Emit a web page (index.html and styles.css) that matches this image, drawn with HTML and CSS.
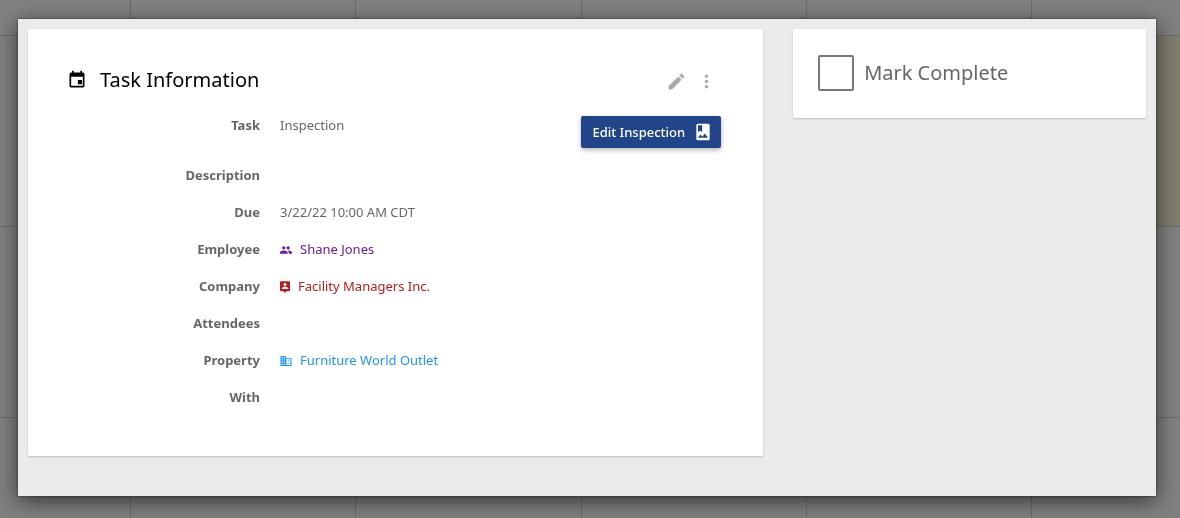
FILE: index.html
```html
<!DOCTYPE html>
<html lang="en">
<head>
  <meta charset="UTF-8">
  <meta name="viewport" content="width=device-width, initial-scale=1.0">
  <title>Task Information</title>
  <link rel="stylesheet" href="styles.css">
</head>
<body>
  <!-- calendar behind the dialog -->
  <div class="calendar" aria-hidden="true">
    <div class="day"></div>
    <div class="day"></div>
    <div class="day"></div>
    <div class="day"></div>
    <div class="day"></div>
    <div class="day"></div>

    <div class="day"></div>
    <div class="day"></div>
    <div class="day"></div>
    <div class="day"></div>
    <div class="day"></div>
    <div class="day today"></div>

    <div class="day"></div>
    <div class="day"></div>
    <div class="day"></div>
    <div class="day"></div>
    <div class="day"></div>
    <div class="day"></div>

    <div class="day"></div>
    <div class="day"></div>
    <div class="day"></div>
    <div class="day"></div>
    <div class="day"></div>
    <div class="day"></div>
  </div>

  <div class="overlay">
    <main class="modal" role="dialog" aria-labelledby="task-title">
      <section class="card task">
        <header class="task-header">
          <svg class="icon-title" viewBox="0 0 24 24"><path d="M18 12h-5v5h5v-5zM16 1v2H8V1H6v2H5c-1.100 0-2 .9-2 2v14c0 1.100.9 2 2 2h14c1.100 0 2-.9 2-2V5c0-1.100-.9-2-2-2h-1V1h-2zm3 18H5V8h14v11z"/></svg>
          <h1 id="task-title">Task Information</h1>
          <div class="actions">
            <button type="button" class="icon-btn" aria-label="Edit">
              <svg viewBox="0 0 24 24"><path d="M3 17.25V21h3.75L17.81 9.94l-3.75-3.75L3 17.25zM20.71 7.04c.39-.39.39-1.02 0-1.41l-2.34-2.34c-.39-.39-1.02-.39-1.41 0l-1.83 1.83 3.75 3.75 1.83-1.83z"/></svg>
            </button>
            <button type="button" class="icon-btn" aria-label="More">
              <svg viewBox="0 0 24 24"><path d="M12 8c1.1 0 2-.9 2-2s-.9-2-2-2-2 .9-2 2 .9 2 2 2zm0 2c-1.1 0-2 .9-2 2s.9 2 2 2 2-.9 2-2-.9-2-2-2zm0 6c-1.1 0-2 .9-2 2s.9 2 2 2 2-.9 2-2-.9-2-2-2z"/></svg>
            </button>
          </div>
        </header>

        <dl class="fields">
          <dt>Task</dt>
          <dd class="with-button">
            <span>Inspection</span>
            <button type="button" class="btn">
              Edit Inspection
              <svg viewBox="0 0 24 24"><path d="M18 2H6c-1.1 0-2 .9-2 2v16c0 1.1.9 2 2 2h12c1.1 0 2-.9 2-2V4c0-1.1-.9-2-2-2zM6 4h5v8l-2.5-1.5L6 12V4zm0 15l3-3.86 2.14 2.58 3-3.86L18 19H6z"/></svg>
            </button>
          </dd>
          <dt>Description</dt>
          <dd></dd>
          <dt>Due</dt>
          <dd>3/22/22 10:00 AM CDT</dd>
          <dt>Employee</dt>
          <dd>
            <a href="#" class="employee">
              <svg width="12" height="8" viewBox="1 5 22 14"><path d="M16 11c1.66 0 2.99-1.34 2.99-3S17.66 5 16 5s-3 1.34-3 3 1.34 3 3 3zm-8 0c1.66 0 2.99-1.34 2.99-3S9.66 5 8 5 5 6.34 5 8s1.34 3 3 3zm0 2c-2.33 0-7 1.17-7 3.5V19h14v-2.5c0-2.33-4.67-3.5-7-3.5zm8 0c-.29 0-.62.02-.97.05 1.16.84 1.97 1.97 1.97 3.45V19h6v-2.5c0-2.33-4.67-3.5-7-3.5z"/></svg>
              Shane Jones
            </a>
          </dd>
          <dt>Company</dt>
          <dd>
            <a href="#" class="company">
              <svg width="10" height="12" viewBox="3 2 18 21"><path d="M19 2H5c-1.1 0-2 .9-2 2v14c0 1.1.9 2 2 2h4l3 3 3-3h4c1.1 0 2-.9 2-2V4c0-1.1-.9-2-2-2zm-7 3.3c1.49 0 2.7 1.21 2.7 2.7s-1.21 2.7-2.7 2.7S9.3 9.49 9.3 8s1.21-2.7 2.7-2.7zM18 16H6v-.9c0-2 4-3.1 6-3.1s6 1.1 6 3.1v.9z"/></svg>
              Facility Managers Inc.
            </a>
          </dd>
          <dt>Attendees</dt>
          <dd></dd>
          <dt>Property</dt>
          <dd>
            <a href="#" class="property">
              <svg width="12" height="10" viewBox="2 3 20 18"><path d="M12 7V3H2v18h20V7H12zM6 19H4v-2h2v2zm0-4H4v-2h2v2zm0-4H4V9h2v2zm0-4H4V5h2v2zm4 12H8v-2h2v2zm0-4H8v-2h2v2zm0-4H8V9h2v2zm0-4H8V5h2v2zm10 12h-8v-2h2v-2h-2v-2h2v-2h-2V9h8v10zm-2-8h-2v2h2v-2zm0 4h-2v2h2v-2z"/></svg>
              Furniture World Outlet
            </a>
          </dd>
          <dt>With</dt>
          <dd></dd>
        </dl>
      </section>

      <section class="card complete">
        <input type="checkbox" id="complete">
        <label for="complete">Mark Complete</label>
      </section>
    </main>
  </div>
</body>
</html>
```
FILE: styles.css
```css
* {
  box-sizing: border-box;
}

body {
  margin: 0;
  font-family: "Noto Sans", sans-serif;
  font-size: 13px;
  color: #666;
  background-color: #808080;
}

.calendar {
  position: fixed;
  inset: 0;
  display: grid;
  grid-template-columns: 131px repeat(4, 1fr) 148px;
  grid-template-rows: 36px 191px 191px 1fr;
}

.day {
  border-right: 1px solid #6c6c6c;
  border-bottom: 1px solid #6c6c6c;
}

.day:nth-child(6n) {
  border-right: none;
}

.day:nth-child(n + 19) {
  border-bottom: none;
}

.today {
  background-color: #7f7d6e;
}

.overlay {
  position: relative;
  padding: 19px 24px 22px 18px;
}

.modal {
  display: grid;
  grid-template-columns: 25fr 12fr;
  gap: 30px;
  align-items: start;
  padding: 10px 10px 40px;
  background-color: #ebebeb;
  box-shadow: 0 5px 20px rgba(0, 0, 0, .6), 0 0 2px rgba(0, 0, 0, .6);
}

.card {
  background-color: #fff;
  border-radius: 2px;
  box-shadow: 0 1px 2px rgba(0, 0, 0, .2);
}

.task {
  padding: 33px 42px 40px 39px;
}

.task-header {
  display: flex;
  align-items: center;
  gap: 13px;
  height: 35px;
  margin-bottom: 10px;
  color: #000;
}

h1 {
  margin: 0;
  font-size: 20px;
  font-weight: 400;
  line-height: 26px;
}

svg {
  display: block;
  fill: currentColor;
  flex: none;
}

.icon-title {
  width: 20px;
  height: 20px;
}

.actions {
  display: flex;
  gap: 9px;
  margin-left: auto;
  padding: 4px 4px 0 0;
}

.icon-btn {
  padding: 0;
  border: none;
  background: none;
  color: #aaa;
  cursor: pointer;
}

.icon-btn svg {
  width: 21px;
  height: 21px;
}

.fields {
  display: grid;
  grid-template-columns: 193px 1fr;
  column-gap: 20px;
  margin: 0;
  line-height: 37px;
}

dt {
  font-weight: 700;
  text-align: right;
}

dd {
  margin: 0;
  min-height: 37px;
}

.with-button {
  display: flex;
  justify-content: space-between;
  align-items: flex-start;
}

.btn {
  display: flex;
  align-items: center;
  gap: 8px;
  height: 32px;
  margin: 9px 0;
  padding: 0 8px 0 11px;
  border: none;
  border-radius: 2px;
  background-color: #224488;
  color: #fff;
  font-family: inherit;
  font-size: 13px;
  font-weight: 500;
  box-shadow: 0 2px 5px rgba(0, 0, 0, .3);
  cursor: pointer;
}

.btn svg {
  width: 20px;
  height: 20px;
}

.fields a {
  display: inline-flex;
  align-items: center;
  gap: 8px;
  text-decoration: none;
  vertical-align: top;
}

.employee {
  color: #6a1b9a;
}

.company {
  color: #b71c1c;
}

.property {
  color: #2196f3;
}

.complete {
  display: flex;
  align-items: center;
  gap: 10px;
  padding: 26px 25px 27px;
  font-size: 20px;
  line-height: 26px;
}

.complete input {
  appearance: none;
  width: 36px;
  height: 36px;
  margin: 0;
  border: 2px solid #777;
  border-radius: 2px;
}

.complete input:checked {
  background-color: #224488;
}
```
